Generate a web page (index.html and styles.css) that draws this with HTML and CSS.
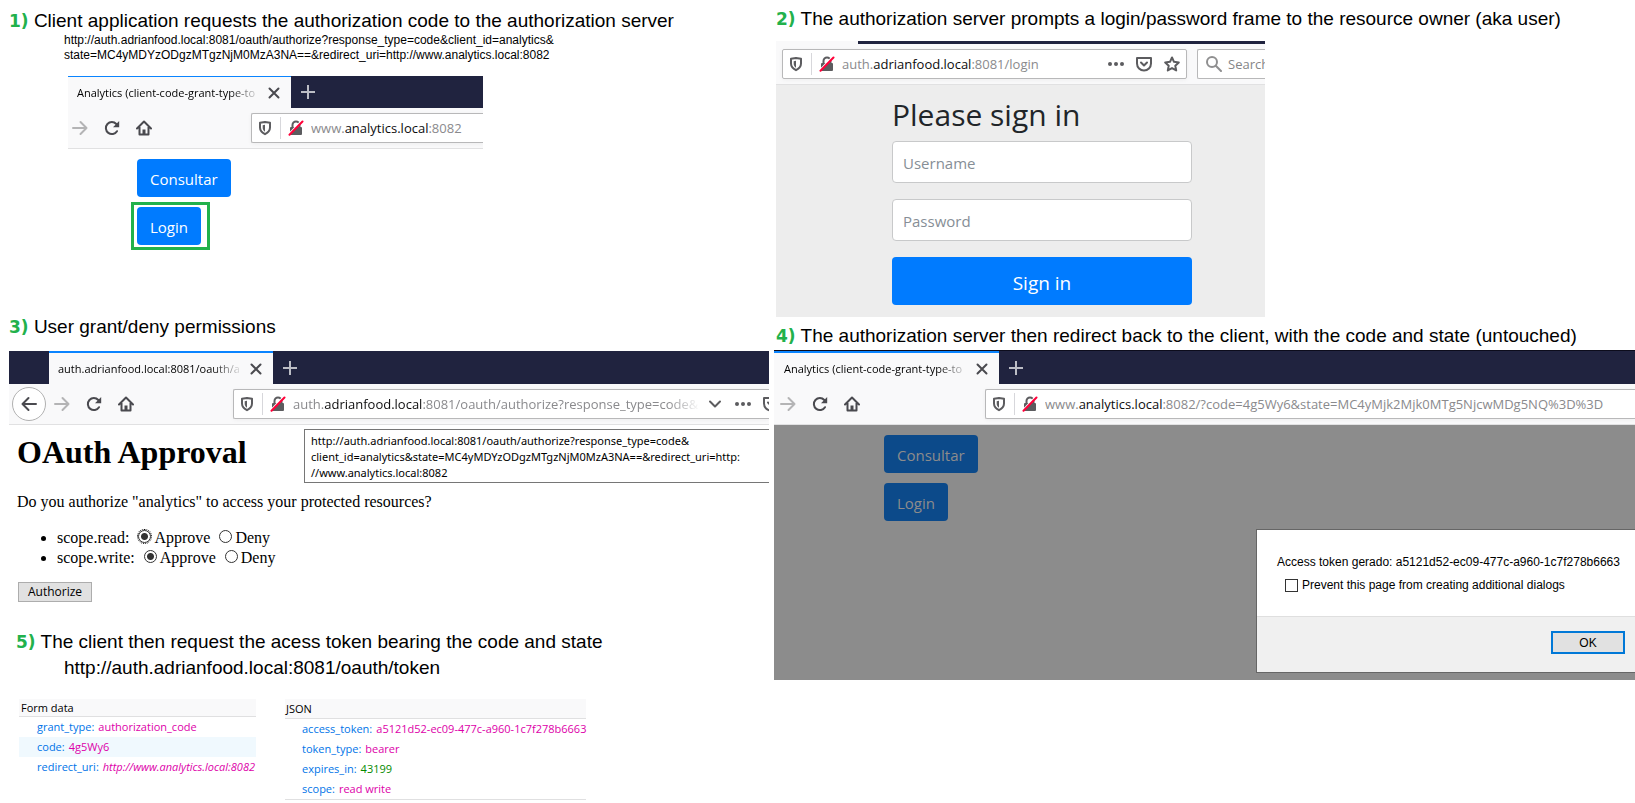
FILE: index.html
```html
<!DOCTYPE html>
<html lang="en">
<head>
<meta charset="utf-8">
<title>OAuth authorization code flow</title>
<link rel="stylesheet" href="styles.css">
</head>
<body>
<svg class="sprite" aria-hidden="true">
  <symbol id="forward" viewBox="0 0 16 16"><path d="M1 8h13.500M8.500 2l6 6-6 6" fill="none" stroke="currentColor" stroke-width="2" stroke-linecap="round" stroke-linejoin="round"/></symbol>
  <symbol id="back" viewBox="0 0 16 16"><path d="M15 8H1.500M7.500 2l-6 6 6 6" fill="none" stroke="currentColor" stroke-width="2" stroke-linecap="round" stroke-linejoin="round"/></symbol>
  <symbol id="reload" viewBox="0 0 16 16"><path d="M13 11.200A6 6 0 1 1 12.300 4" fill="none" stroke="currentColor" stroke-width="2" stroke-linecap="round"/><path d="M15.200 1v6.200H9z" fill="currentColor"/></symbol>
  <symbol id="home" viewBox="0 0 16 16"><path d="M1 8.500l7-7 7 7M3.500 7v7.500h9V7" fill="none" stroke="currentColor" stroke-width="2" stroke-linecap="round" stroke-linejoin="round"/><path d="M6.500 14.500v-5h3v5z" fill="currentColor"/></symbol>
  <symbol id="shield" viewBox="0 0 16 16"><path d="M8 2l5 .8v4.700c0 3-1.800 5-5 6.700-3.200-1.700-5-3.700-5-6.700V2.800z" fill="none" stroke="currentColor" stroke-width="2" stroke-linejoin="round"/><path d="M8 4.800l-2.300.4v2.500c0 1.700.8 3 2.300 4z" fill="currentColor"/></symbol>
  <symbol id="lock" viewBox="0 0 16 16"><path d="M4.500 8V5a3.500 3.500 0 0 1 7 0v3" fill="none" stroke="#5c5c5f" stroke-width="2"/><rect x="2" y="7" width="12" height="8" rx="1" fill="#5c5c5f"/><path d="M.8 14L13.500 .8" stroke="#fff" stroke-width="1.500"/><path d="M1.500 14.800L14.500 1.500" stroke="#ff0039" stroke-width="2" stroke-linecap="round"/></symbol>
  <symbol id="close" viewBox="0 0 16 16"><path d="M3.500 3.500l9 9M12.500 3.500l-9 9" stroke="currentColor" stroke-width="2" stroke-linecap="round"/></symbol>
  <symbol id="plus" viewBox="0 0 16 16"><path d="M8 1v14M1 8h14" stroke="currentColor" stroke-width="2"/></symbol>
  <symbol id="dots" viewBox="0 0 16 16"><g fill="currentColor"><circle cx="2" cy="8" r="2"/><circle cx="8" cy="8" r="2"/><circle cx="14" cy="8" r="2"/></g></symbol>
  <symbol id="chevron" viewBox="0 0 16 16"><path d="M3 5.500l5 5 5-5" fill="none" stroke="currentColor" stroke-width="2" stroke-linecap="round" stroke-linejoin="round"/></symbol>
  <symbol id="pocket" viewBox="0 0 16 16"><path d="M1 2h14v5.500a7 7 0 0 1-14 0z" fill="none" stroke="currentColor" stroke-width="2" stroke-linejoin="round"/><path d="M5 6.500l3 3 3-3" fill="none" stroke="currentColor" stroke-width="2" stroke-linecap="round" stroke-linejoin="round"/></symbol>
  <symbol id="star" viewBox="0 0 16 16"><path d="M8 1.500l2 4.300 4.800.6-3.500 3.300.9 4.700L8 12.100l-4.200 2.300.9-4.700L1.200 6.400 6 5.800z" fill="none" stroke="currentColor" stroke-width="2" stroke-linejoin="round"/></symbol>
  <symbol id="search" viewBox="0 0 16 16"><circle cx="6" cy="6" r="5" fill="none" stroke="currentColor" stroke-width="2"/><path d="M9.800 9.800l5.200 5.200" stroke="currentColor" stroke-width="2" stroke-linecap="round"/></symbol>
</svg>

<main class="flow">
  <div class="column column-left">
    <section class="step step-request">
      <h2 class="step-title"><span class="num">1)</span> Client application requests the authorization code to the authorization server</h2>
      <p class="request-url">http://auth.adrianfood.local:8081/oauth/authorize?response_type=code&amp;client_id=analytics&amp;<br>state=MC4yMDYzODgzMTgzNjM0MzA3NA==&amp;redirect_uri=http://www.analytics.local:8082</p>
      <div class="browser browser-client">
        <div class="tabs">
          <div class="tab"><span class="tab-label">Analytics (client-code-grant-type-to</span><button class="icon-button" aria-label="Close tab"><svg class="icon"><use href="#close"/></svg></button></div>
          <button class="icon-button new-tab" aria-label="New tab"><svg class="icon"><use href="#plus"/></svg></button>
        </div>
        <div class="toolbar">
          <button class="icon-button disabled" aria-label="Forward"><svg class="icon"><use href="#forward"/></svg></button>
          <button class="icon-button" aria-label="Reload"><svg class="icon"><use href="#reload"/></svg></button>
          <button class="icon-button" aria-label="Home"><svg class="icon"><use href="#home"/></svg></button>
          <div class="address">
            <svg class="icon"><use href="#shield"/></svg><span class="divider"></span><svg class="icon"><use href="#lock"/></svg>
            <span class="url">www.<b>analytics.local</b>:8082</span>
          </div>
        </div>
      </div>
      <div class="client-actions">
        <button class="btn">Consultar</button>
        <div class="highlight"><button class="btn">Login</button></div>
      </div>
    </section>

    <section class="step step-grant">
      <h2 class="step-title"><span class="num">3)</span> User grant/deny permissions</h2>
      <div class="browser">
        <div class="tabs tabs-inset">
          <div class="tab"><span class="tab-label">auth.adrianfood.local:8081/oauth/a</span><button class="icon-button" aria-label="Close tab"><svg class="icon"><use href="#close"/></svg></button></div>
          <button class="icon-button new-tab" aria-label="New tab"><svg class="icon"><use href="#plus"/></svg></button>
        </div>
        <div class="toolbar">
          <button class="icon-button back" aria-label="Back"><svg class="icon"><use href="#back"/></svg></button>
          <button class="icon-button disabled" aria-label="Forward"><svg class="icon"><use href="#forward"/></svg></button>
          <button class="icon-button" aria-label="Reload"><svg class="icon"><use href="#reload"/></svg></button>
          <button class="icon-button" aria-label="Home"><svg class="icon"><use href="#home"/></svg></button>
          <div class="address">
            <svg class="icon"><use href="#shield"/></svg><span class="divider"></span><svg class="icon"><use href="#lock"/></svg>
            <span class="url url-fade">auth.<b>adrianfood.local</b>:8081/oauth/authorize?response_type=code&amp;</span>
            <span class="address-tools"><svg class="icon"><use href="#chevron"/></svg><svg class="icon"><use href="#dots"/></svg><svg class="icon"><use href="#pocket"/></svg></span>
          </div>
        </div>
      </div>
      <form class="approval">
        <div class="tooltip" role="tooltip">http://auth.adrianfood.local:8081/oauth/authorize?response_type=code&amp;<br>client_id=analytics&amp;state=MC4yMDYzODgzMTgzNjM0MzA3NA==&amp;redirect_uri=http:<br>//www.analytics.local:8082</div>
        <h1 class="approval-title">OAuth Approval</h1>
        <p class="approval-text">Do you authorize "analytics" to access your protected resources?</p>
        <ul class="scopes">
          <li><span class="scope">scope.read:</span><label><input class="radio focused" type="radio" name="read" checked>Approve</label><label><input class="radio" type="radio" name="read">Deny</label></li>
          <li><span class="scope">scope.write:</span><label><input class="radio" type="radio" name="write" checked>Approve</label><label><input class="radio" type="radio" name="write">Deny</label></li>
        </ul>
        <button class="native-button" type="button">Authorize</button>
      </form>
    </section>

    <section class="step step-token">
      <h2 class="step-title"><span class="num">5)</span> The client then request the acess token bearing the code and state</h2>
      <p class="token-url">http://auth.adrianfood.local:8081/oauth/token</p>
      <div class="payloads">
        <div class="payload">
          <h3 class="payload-title">Form data</h3>
          <dl class="fields">
            <div><dt>grant_type:</dt><dd>authorization_code</dd></div>
            <div class="selected"><dt>code:</dt><dd>4g5Wy6</dd></div>
            <div><dt>redirect_uri:</dt><dd class="link">http://www.analytics.local:8082</dd></div>
          </dl>
        </div>
        <div class="payload payload-json">
          <h3 class="payload-title">JSON</h3>
          <dl class="fields">
            <div><dt>access_token:</dt><dd>a5121d52-ec09-477c-a960-1c7f278b6663</dd></div>
            <div><dt>token_type:</dt><dd>bearer</dd></div>
            <div><dt>expires_in:</dt><dd class="number">43199</dd></div>
            <div><dt>scope:</dt><dd>read write</dd></div>
          </dl>
        </div>
      </div>
    </section>
  </div>

  <div class="column">
    <section class="step step-login">
      <h2 class="step-title"><span class="num">2)</span> The authorization server prompts a login/password frame to the resource owner (aka user)</h2>
      <div class="browser browser-login">
        <div class="tab-strip"></div>
        <div class="toolbar">
          <div class="address">
            <svg class="icon"><use href="#shield"/></svg><span class="divider"></span><svg class="icon"><use href="#lock"/></svg>
            <span class="url">auth.<b>adrianfood.local</b>:8081/login</span>
            <span class="address-tools"><svg class="icon"><use href="#dots"/></svg><svg class="icon"><use href="#pocket"/></svg><svg class="icon"><use href="#star"/></svg></span>
          </div>
          <label class="search"><svg class="icon"><use href="#search"/></svg><input class="search-input" type="text" placeholder="Search" aria-label="Search"></label>
        </div>
        <form class="signin">
          <h1 class="signin-title">Please sign in</h1>
          <input class="field" type="text" placeholder="Username" aria-label="Username">
          <input class="field" type="password" placeholder="Password" aria-label="Password">
          <button class="btn btn-large" type="button">Sign in</button>
        </form>
      </div>
    </section>

    <section class="step step-redirect">
      <h2 class="step-title"><span class="num">4)</span> The authorization server then redirect back to the client, with the code and state (untouched)</h2>
      <div class="browser browser-redirect">
        <div class="tabs">
          <div class="tab"><span class="tab-label">Analytics (client-code-grant-type-to</span><button class="icon-button" aria-label="Close tab"><svg class="icon"><use href="#close"/></svg></button></div>
          <button class="icon-button new-tab" aria-label="New tab"><svg class="icon"><use href="#plus"/></svg></button>
        </div>
        <div class="toolbar">
          <button class="icon-button disabled" aria-label="Forward"><svg class="icon"><use href="#forward"/></svg></button>
          <button class="icon-button" aria-label="Reload"><svg class="icon"><use href="#reload"/></svg></button>
          <button class="icon-button" aria-label="Home"><svg class="icon"><use href="#home"/></svg></button>
          <div class="address">
            <svg class="icon"><use href="#shield"/></svg><span class="divider"></span><svg class="icon"><use href="#lock"/></svg>
            <span class="url">www.<b>analytics.local</b>:8082/?code=4g5Wy6&amp;state=MC4yMjk2Mjk0MTg5NjcwMDg5NQ%3D%3D</span>
          </div>
        </div>
        <div class="dimmed">
          <div class="dimmed-actions"><button class="btn">Consultar</button><button class="btn">Login</button></div>
          <div class="dialog" role="dialog" aria-label="Access token">
            <div class="dialog-body">
              <p class="dialog-text">Access token gerado: a5121d52-ec09-477c-a960-1c7f278b6663</p>
              <label class="prevent"><input class="checkbox" type="checkbox">Prevent this page from creating additional dialogs</label>
            </div>
            <div class="dialog-footer"><button class="native-button ok">OK</button></div>
          </div>
        </div>
      </div>
    </section>
  </div>
</main>
</body>
</html>
```

FILE: styles.css
```css
* { box-sizing: border-box; }

body {
  margin: 0;
  background: #fff;
  color: #000;
  font-family: "Liberation Sans", Arial, sans-serif;
}

h1, h2, h3, p, ul, dl, dd { margin: 0; padding: 0; }

button, input { font: inherit; }

.sprite { display: none; }

.flow {
  display: grid;
  grid-template-columns: minmax(0, 774fr) minmax(0, 861fr);
}

.column { display: flex; flex-direction: column; min-width: 0; }
.column-left { padding: 0 5px 0 9px; }

.step-title {
  font-size: 19px;
  font-weight: 400;
  line-height: 22px;
  white-space: nowrap;
}

.num {
  color: #22b14c;
  font-family: "DejaVu Sans", sans-serif;
  font-size: 17px;
  font-weight: 700;
}

/* Browser chrome */
.browser {
  background: #f9f9fa;
  font-family: "Open Sans", "Segoe UI", sans-serif;
  overflow: hidden;
}

.tabs { display: flex; height: 33px; background: #20233f; }
.tabs-inset { padding-left: 40px; }

.tab {
  display: flex;
  align-items: center;
  gap: 1px;
  width: 224px;
  padding: 0 9px 0 9px;
  border-top: 2px solid #0a84ff;
  background: #f9f9fa;
  font-size: 11px;
}

.tab-label {
  flex: 1;
  overflow: hidden;
  white-space: nowrap;
  mask-image: linear-gradient(to left, transparent 4px, #000 36px);
}

.icon-button {
  display: flex;
  flex: none;
  padding: 0;
  border: 0;
  background: none;
  color: #4a4a4f;
}

.icon { flex: none; width: 16px; height: 16px; color: #5c5c5f; }
.icon-button .icon { color: inherit; }
.icon-button.disabled { color: #b4b4b5; }
.new-tab { align-self: center; margin-left: 9px; color: #bcbdc5; }

.toolbar {
  display: flex;
  align-items: center;
  gap: 16px;
  height: 41px;
  padding-left: 4px;
  border-bottom: 1px solid #e1e1e2;
}

.back {
  width: 34px;
  height: 34px;
  margin-right: -8px;
  align-items: center;
  justify-content: center;
  border: 1px solid #b1b1b1;
  border-radius: 50%;
  background: #fff;
}

.address {
  display: flex;
  flex: 1;
  align-items: center;
  gap: 7px;
  min-width: 0;
  height: 30px;
  margin-left: 83px;
  padding-left: 5px;
  border: 1px solid #b8b8b9;
  border-right: 0;
  border-radius: 2px 0 0 2px;
  background: #fff;
  box-shadow: 0 1px 4px #0000000d;
}

.divider { width: 1px; height: 22px; background: #d7d7db; }

.url {
  flex: 1;
  overflow: hidden;
  color: #8a8a8d;
  font-size: 13px;
  white-space: nowrap;
}

.url b { color: #0c0c0d; font-weight: 400; }
.url-fade { mask-image: linear-gradient(to left, transparent, #000 32px); }
.address-tools { display: flex; gap: 12px; }

.btn {
  height: 38px;
  padding: 1px 13px 0;
  border: 0;
  border-radius: 4px;
  background: #007bff;
  color: #fff;
  font-family: "Open Sans", "Segoe UI", sans-serif;
  font-size: 15px;
}

/* Step 1 */
.step-request { height: 316px; padding-top: 10px; }
.request-url { margin: 1px 0 0 55px; font-size: 12px; line-height: 15px; }
.browser-client { width: 415px; margin: 13px 0 0 59px; }
.browser-client .tabs { height: 32px; }
.browser-client .tab { width: 223px; border-top-width: 1px; }

.client-actions {
  display: flex;
  flex-direction: column;
  align-items: flex-start;
  gap: 5px;
  padding: 10px 0 0 128px;
}

.highlight { display: flex; margin-left: -6px; padding: 2px 6px 2px 3px; border: 3px solid #22b14c; }

/* Step 3 */
.step-grant .browser { margin-top: 13px; }
.step-grant .toolbar { padding-left: 3px; }
.step-grant .address-tools { margin-right: -10px; }

.approval { position: relative; padding: 7px 8px 8px; font-family: "Liberation Serif", "Times New Roman", serif; }
.approval-title { font-size: 32px; line-height: 40px; }
.approval-text { margin-top: 20px; font-size: 16px; line-height: 20px; }
.scopes { margin: 16px 0 14px; padding-left: 40px; font-size: 16px; line-height: 20px; }
.scopes label { margin-left: 9px; }

.radio {
  appearance: none;
  width: 13px;
  height: 13px;
  margin: 0 3px 0 0;
  border: 1px solid #333;
  border-radius: 50%;
  background: #fff;
}

.radio:checked { background: radial-gradient(circle, #333 3px, #fff 4px); }
.radio.focused { outline: 1px dotted #000; }

.native-button {
  height: 20px;
  margin-left: 1px;
  padding: 0 9px;
  border: 1px solid #adadad;
  background: #e1e1e1;
  font-family: "Open Sans", "Segoe UI", sans-serif;
  font-size: 12px;
  line-height: 18px;
}

.tooltip {
  position: absolute;
  top: 4px;
  right: 0;
  width: 465px;
  padding: 3px 0 1px 6px;
  border: 1px solid #767676;
  border-right: 0;
  background: #fff;
  font-family: "Noto Sans", "Segoe UI", sans-serif;
  font-size: 11px;
  line-height: 16px;
  white-space: nowrap;
}

/* Step 5 */
.step-token { padding: 21px 0 0 7px; }
.token-url { margin: 4px 0 0 48px; font-size: 19px; line-height: 22px; }

.payloads {
  display: flex;
  align-items: flex-start;
  gap: 29px;
  margin: 20px 0 0 3px;
  font-family: "Open Sans", "Segoe UI", sans-serif;
  font-size: 11px;
  line-height: 20px;
}

.payload { width: 237px; }
.payload-json { width: 301px; border-bottom: 1px solid #e0e0e1; }
.payload-title {
  padding-left: 2px;
  border-bottom: 1px solid #e0e0e1;
  background: #f9f9fa;
  font-size: 11px;
  font-weight: 400;
  line-height: 17px;
}
.payload-json .payload-title { padding-left: 1px; line-height: 19px; }
.fields div { display: flex; gap: 4px; padding-left: 18px; white-space: nowrap; }
.payload-json .fields div { padding-left: 17px; }
.fields .selected { background: #f0f9fe; }
.fields dt { color: #0074e8; }
.fields dd { color: #dd00a9; }
.fields .link { font-style: italic; }
.fields .number { color: #058b00; }

/* Step 2 */
.step-login { height: 325px; padding: 8px 0 0 2px; }
.browser-login { width: 489px; margin-top: 11px; }
.tab-strip { height: 3px; margin-left: 82px; background: #20233f; }
.browser-login .toolbar { gap: 10px; padding-left: 6px; }
.browser-login .address { margin-left: 0; padding-right: 6px; border-right: 1px solid #b8b8b9; border-radius: 2px; }

.search {
  display: flex;
  align-items: center;
  gap: 6px;
  width: 68px;
  height: 30px;
  padding-left: 8px;
  border: 1px solid #b8b8b9;
  border-right: 0;
  border-radius: 2px 0 0 2px;
  background: #fff;
}

.search .icon { color: #8f8f90; }
.search-input { width: 100%; min-width: 0; padding: 0; border: 0; font-size: 13px; }
.search-input::placeholder { color: #858587; }

.signin {
  display: flex;
  flex-direction: column;
  gap: 16px;
  padding: 10px 73px 12px 116px;
  background: #ededed;
}

.signin-title { margin-bottom: -10px; color: #212529; font-size: 30px; font-weight: 400; line-height: 40px; }

.field {
  width: 100%;
  height: 42px;
  padding: 1px 10px 0;
  border: 1px solid #c8c9ca;
  border-radius: 4px;
  background: #fff;
  font-size: 15px;
}

.field::placeholder { color: #868e96; }
.btn-large { height: 48px; padding-top: 3px; font-size: 19px; }

/* Step 4 */
.step-redirect .step-title { padding-left: 2px; }
.browser-redirect { margin-top: 3px; }
.browser-redirect .tabs { height: 34px; border-top: 1px solid #0c0c1c; }
.browser-redirect .tab { width: 225px; padding-left: 10px; }
.browser-redirect .toolbar { padding-left: 6px; }
.browser-redirect .address { margin-left: 109px; }

.dimmed {
  display: flex;
  flex-direction: column;
  padding: 10px 0 7px 110px;
  background: #8c8c8c;
}

.dimmed-actions { display: flex; flex-direction: column; align-items: flex-start; gap: 10px; }
.dimmed .btn { background: #0c4a8a; color: #8c8c8c; }

.dialog {
  align-self: flex-end;
  width: 379px;
  margin-top: 8px;
  border: 1px solid #666;
  border-right: 0;
  background: #fff;
  font-family: "Liberation Sans", Arial, sans-serif;
  font-size: 12px;
  line-height: 16px;
}

.dialog-body { padding: 24px 0 0 20px; height: 86px; white-space: nowrap; }
.prevent { display: flex; align-items: center; gap: 4px; margin: 7px 0 0 8px; }

.checkbox {
  appearance: none;
  width: 13px;
  height: 13px;
  margin: 0;
  border: 1px solid #333;
  background: #fff;
}

.dialog-footer {
  display: flex;
  justify-content: flex-end;
  padding: 14px 10px 18px;
  border-top: 1px solid #dfdfdf;
  background: #f0f0f0;
}

.ok {
  width: 74px;
  height: 23px;
  border: 2px solid #0078d7;
  font-family: "Liberation Sans", Arial, sans-serif;
}
```
